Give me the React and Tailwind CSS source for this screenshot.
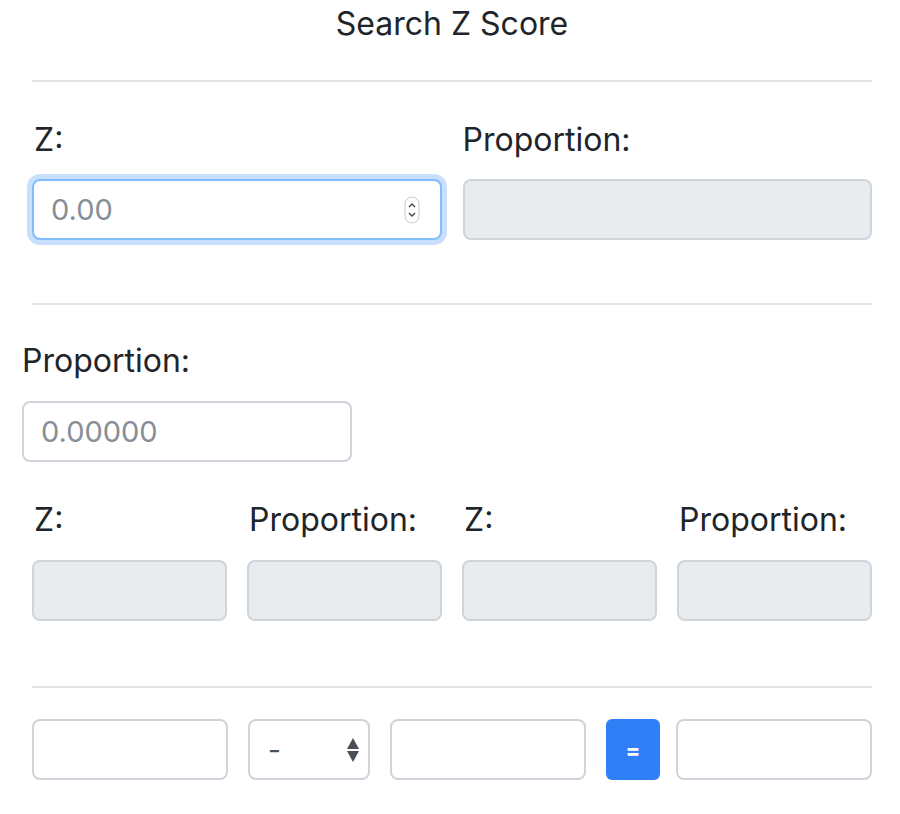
import React from 'react';

const font = { fontFamily: 'Inter, "Liberation Sans", sans-serif' };

function Spinner() {
  return (
    <svg width="16" height="28" viewBox="0 0 16 28" className="shrink-0">
      <rect x="1" y="1" width="14" height="26" rx="7" fill="#fff" stroke="#c8c8c8" />
      <path d="M5 11 L8 8 L11 11" fill="none" stroke="#444" strokeWidth="1.4" />
      <path d="M5 17 L8 20 L11 17" fill="none" stroke="#444" strokeWidth="1.4" />
    </svg>
  );
}

function Label({ children, className = '' }) {
  return <div className={`h-[48px] leading-[48px] text-[32px] text-[#212529] ${className}`}>{children}</div>;
}

function Box({ className = '', disabled, children }) {
  return (
    <div
      className={`h-[61px] rounded-[8px] border-2 border-[#ced4da] ${disabled ? 'bg-[#e9ecef]' : 'bg-white'} ${className}`}
    >
      {children}
    </div>
  );
}

export default function App() {
  return (
    <div className="w-[900px] h-[814px] bg-white overflow-hidden" style={font}>
      <div className="h-[48px] leading-[48px] text-center text-[32px] text-[#212529] pl-[4px]">Search Z Score</div>

      <div className="ml-[32px] w-[840px]">
        <div className="mt-[32px] border-t-2 border-[#e5e5e5]" />

        {/* first section */}
        <div className="mt-[34px] grid grid-cols-2 gap-x-[21px]">
          <div>
            <Label className="pl-[2px]">Z:</Label>
            <div className="mt-[15px] h-[61px] rounded-[8px] border-2 border-[#80bdff] bg-white shadow-[0_0_0_5px_#c9dffc] flex items-center pl-[17px] pr-[20px]">
              <span className="flex-1 text-[29px] text-[#868e96]">0.00</span>
              <Spinner />
            </div>
          </div>
          <div>
            <Label>Proportion:</Label>
            <Box disabled className="mt-[15px]" />
          </div>
        </div>

        <div className="mt-[63px] border-t-2 border-[#e5e5e5]" />
      </div>

      {/* second section */}
      <div className="ml-[22px] w-[850px]">
        <Label className="mt-[32px]">Proportion:</Label>
        <div className="mt-[16px] w-[330px] h-[61px] rounded-[8px] border-2 border-[#ced4da] bg-white flex items-center pl-[17px]">
          <span className="text-[29px] text-[#868e96]">0.00000</span>
        </div>
      </div>

      <div className="ml-[32px] w-[840px]">
        <div className="mt-[34px] grid grid-cols-4 gap-x-[20px]">
          {['Z:', 'Proportion:', 'Z:', 'Proportion:'].map((t, i) => (
            <div key={i}>
              <Label className="pl-[2px]">{t}</Label>
              <Box disabled className="mt-[16px]" />
            </div>
          ))}
        </div>

        <div className="mt-[65px] border-t-2 border-[#e5e5e5]" />

        <div className="mt-[31px] flex gap-x-[20px]">
          <Box className="w-[196px]" />
          <div className="w-[122px] h-[61px] rounded-[8px] border-2 border-[#ced4da] bg-white flex items-center justify-between pl-[18px] pr-[8px]">
            <span className="text-[28px] text-[#495057] leading-none">-</span>
            <svg width="14" height="26" viewBox="0 0 14 26">
              <path d="M7 1 L13 12 L1 12 Z" fill="#4a4f55" />
              <path d="M1 14 L13 14 L7 25 Z" fill="#4a4f55" />
            </svg>
          </div>
          <Box className="w-[196px]" />
          <button className="w-[54px] h-[61px] rounded-[6px] bg-[#2f7ff7] text-white text-[22px] font-bold leading-none">=</button>
          <Box className="w-[196px] -ml-[4px]" />
        </div>
      </div>
    </div>
  );
}
